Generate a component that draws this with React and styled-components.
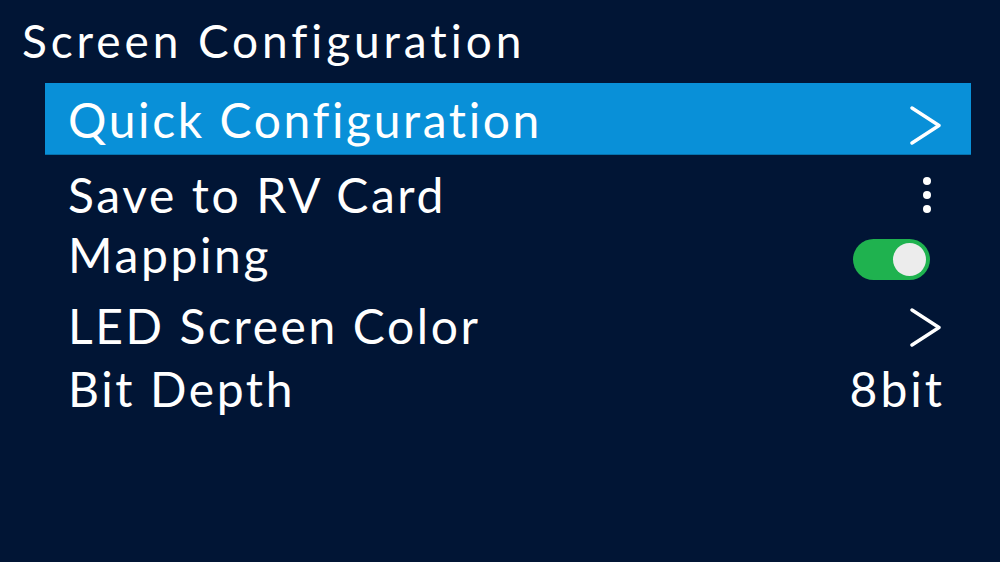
import styled, { createGlobalStyle } from "styled-components";

const GlobalStyle = createGlobalStyle`
  html, body {
    margin: 0;
    padding: 0;
    background: #011535;
  }
  body {
    font-family: Lato, "Open Sans", sans-serif;
    color: #fff;
  }
`;

const Screen = styled.div`
  width: 1000px;
  height: 562px;
  background: #011535;
  overflow: hidden;
  display: flex;
  flex-direction: column;
`;

const Title = styled.h1`
  margin: 0;
  padding: 12px 0 0 22px;
  height: 70px;
  box-sizing: border-box;
  font-size: 46px;
  font-weight: 400;
  letter-spacing: 3.9px;
  line-height: 58px;
`;

const Menu = styled.ul`
  list-style: none;
  margin: 13px 0 0 45px;
  padding: 0;
  width: 926px;
  display: flex;
  flex-direction: column;
`;

const Row = styled.li`
  display: flex;
  align-items: center;
  justify-content: space-between;
  height: ${(p) => (p.$active ? "72px" : "60px")};
  margin-top: ${(p) => p.$gap || 0}px;
  padding: ${(p) => (p.$active ? "3px" : "0")} 29px 0 23px;
  background: ${(p) => (p.$active ? "#0990d8" : "transparent")};
  border-bottom: ${(p) => (p.$active ? "1px solid #0672ad" : "none")};
  box-sizing: border-box;
`;

const Label = styled.span`
  font-size: 48px;
  letter-spacing: 2.6px;
  line-height: 1;
`;

const Value = styled.span`
  font-size: 48px;
  letter-spacing: 3px;
  line-height: 1;
  margin-right: -3px;
`;

const Dots = styled.div`
  display: flex;
  flex-direction: column;
  gap: 6px;
  margin-right: 11px;
  & span {
    width: 8px;
    height: 8px;
    border-radius: 50%;
    background: #fff;
  }
`;

const Toggle = styled.div`
  width: 77px;
  height: 41px;
  border-radius: 21px;
  background: ${(p) => (p.$on ? "#1fb24f" : "#555")};
  display: flex;
  align-items: center;
  justify-content: ${(p) => (p.$on ? "flex-end" : "flex-start")};
  padding: 0 4px;
  box-sizing: border-box;
  margin: 8px 12px 0 0;
  & span {
    width: 33px;
    height: 33px;
    border-radius: 50%;
    background: #ececec;
  }
`;

const ChevronBox = styled.svg`
  display: block;
  margin-top: ${(p) => p.$drop || 0}px;
`;

const Chevron = ({ drop }) => (
  <ChevronBox width="32" height="39" viewBox="0 0 32 39" $drop={drop}>
    <polyline
      points="2,2 29,19.5 2,37"
      fill="none"
      stroke="#fff"
      strokeWidth="3.4"
      strokeLinecap="round"
      strokeLinejoin="round"
    />
  </ChevronBox>
);

const items = [
  { label: "Quick Configuration", kind: "chevron", active: true, drop: 10 },
  { label: "Save to RV Card", kind: "dots", gap: 10 },
  { label: "Mapping", kind: "toggle" },
  { label: "LED Screen Color", kind: "chevron", gap: 11, drop: 2 },
  { label: "Bit Depth", kind: "value", value: "8bit", gap: 3 },
];

const Trailing = ({ item }) => {
  if (item.kind === "chevron") return <Chevron drop={item.drop} />;
  if (item.kind === "dots")
    return (
      <Dots>
        <span />
        <span />
        <span />
      </Dots>
    );
  if (item.kind === "toggle")
    return (
      <Toggle $on>
        <span />
      </Toggle>
    );
  return <Value>{item.value}</Value>;
};

export default function App() {
  return (
    <Screen>
      <GlobalStyle />
      <Title>Screen Configuration</Title>
      <Menu>
        {items.map((item) => (
          <Row key={item.label} $active={item.active} $gap={item.gap}>
            <Label>{item.label}</Label>
            <Trailing item={item} />
          </Row>
        ))}
      </Menu>
    </Screen>
  );
}
